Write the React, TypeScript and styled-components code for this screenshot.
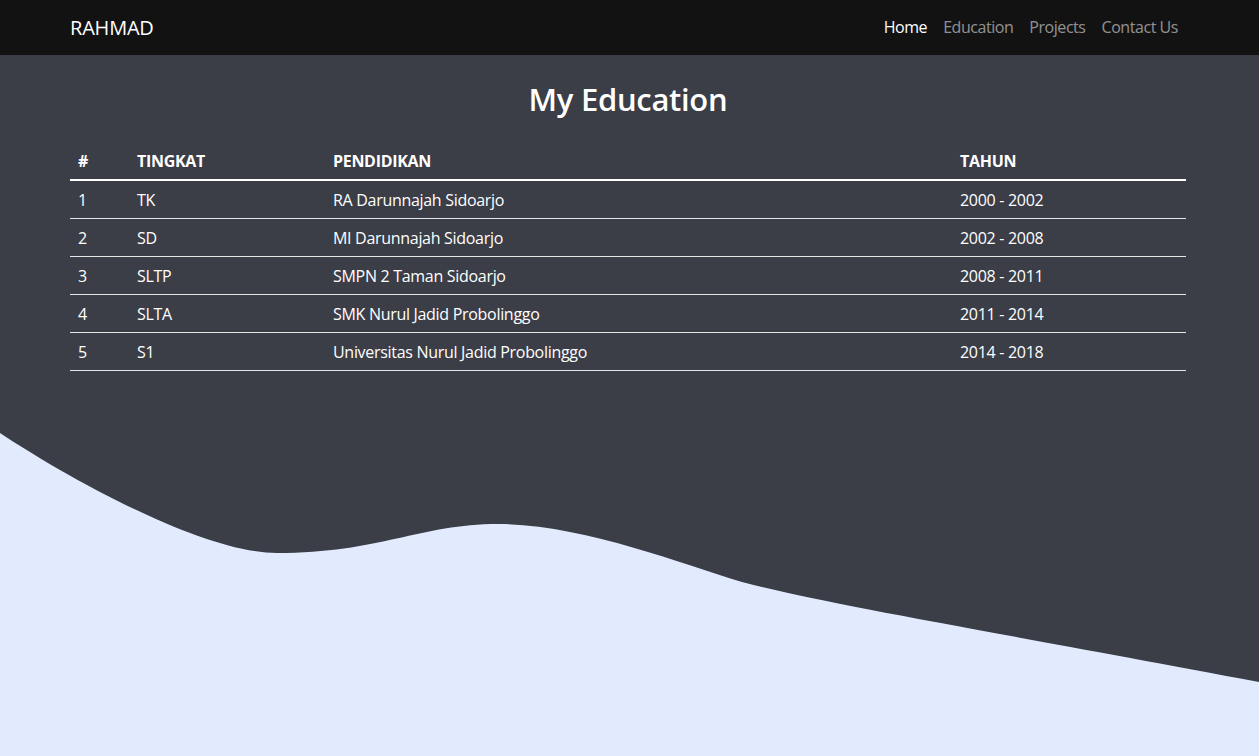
import React from "react";
import styled, { createGlobalStyle } from "styled-components";

const Global = createGlobalStyle`
  html, body { margin: 0; padding: 0; }
  body {
    font-family: "Open Sans", "Noto Sans", sans-serif;
    background: #3b3d47;
    color: #ffffff;
  }
  * { box-sizing: border-box; }
`;

const Page = styled.div`
  min-height: 100vh;
  display: flex;
  flex-direction: column;
  background: #3b3d47;
  overflow: hidden;
`;

const NavBar = styled.nav`
  height: 55px;
  background: #121212;
  display: flex;
  align-items: center;
`;

const Container = styled.div`
  width: 1116px;
  margin-left: 70px;
`;

const NavInner = styled(Container)`
  display: flex;
  align-items: center;
  justify-content: space-between;
  margin-top: -1px;
`;

const Brand = styled.a`
  font-size: 20px;
  color: #ffffff;
  text-decoration: none;
  letter-spacing: -0.2px;
`;

const NavList = styled.ul`
  display: flex;
  list-style: none;
  margin: 0;
  padding: 0;
`;

const NavLink = styled.a<{ $active?: boolean }>`
  display: block;
  padding: 8px 8px;
  font-size: 16px;
  letter-spacing: -0.45px;
  color: ${(p) => (p.$active ? "#ffffff" : "rgba(255,255,255,0.55)")};
  text-decoration: none;
`;

const Main = styled.main`
  flex: 1;
`;

const Title = styled.h1`
  margin: 23px 0 21px;
  text-align: center;
  font-size: 31px;
  font-weight: 600;
  line-height: 42px;
  letter-spacing: -0.3px;
`;

const Table = styled.table`
  width: 100%;
  border-collapse: collapse;
  font-size: 16px;
  letter-spacing: -0.3px;
`;

const Th = styled.th<{ $w?: number }>`
  text-align: left;
  font-weight: 700;
  font-size: 16px;
  letter-spacing: -0.3px;
  padding: 9px 8px 7px;
  height: 38px;
  border-bottom: 2px solid #ffffff;
  width: ${(p) => (p.$w ? `${p.$w}px` : "auto")};
`;

const Td = styled.td`
  padding: 9px 8px 7px;
  height: 38px;
  line-height: 21px;
  border-bottom: 1px solid #e6e6e6;
`;

const WaveSvg = styled.svg`
  display: block;
  width: 100%;
  height: 323px;
  margin-top: 62px;
`;

const rows = [
  ["1", "TK", "RA Darunnajah Sidoarjo", "2000 - 2002"],
  ["2", "SD", "MI Darunnajah Sidoarjo", "2002 - 2008"],
  ["3", "SLTP", "SMPN 2 Taman Sidoarjo", "2008 - 2011"],
  ["4", "SLTA", "SMK Nurul Jadid Probolinggo", "2011 - 2014"],
  ["5", "S1", "Universitas Nurul Jadid Probolinggo", "2014 - 2018"],
];

export default function App() {
  return (
    <Page>
      <Global />
      <NavBar>
        <NavInner>
          <Brand href="#">RAHMAD</Brand>
          <NavList>
            <li><NavLink $active href="#">Home</NavLink></li>
            <li><NavLink href="#">Education</NavLink></li>
            <li><NavLink href="#">Projects</NavLink></li>
            <li><NavLink href="#">Contact Us</NavLink></li>
          </NavList>
        </NavInner>
      </NavBar>
      <Main>
        <Container>
          <Title>My Education</Title>
          <Table>
            <thead>
              <tr>
                <Th $w={59}>#</Th>
                <Th $w={196}>TINGKAT</Th>
                <Th $w={627}>PENDIDIKAN</Th>
                <Th>TAHUN</Th>
              </tr>
            </thead>
            <tbody>
              {rows.map((r) => (
                <tr key={r[0]}>
                  {r.map((c, i) => (
                    <Td key={i}>{c}</Td>
                  ))}
                </tr>
              ))}
            </tbody>
          </Table>
        </Container>
      </Main>
      <WaveSvg viewBox="0 0 1259 323" preserveAspectRatio="none">
        <path
          fill="#e2ebfe"
          d="M0,0 C60,40 200,120 277,120 C380,120 420,91 498,91 C580,91 680,130 742,149 C830,172 1000,200 1259,249 L1259,323 L0,323 Z"
        />
      </WaveSvg>
    </Page>
  );
}
